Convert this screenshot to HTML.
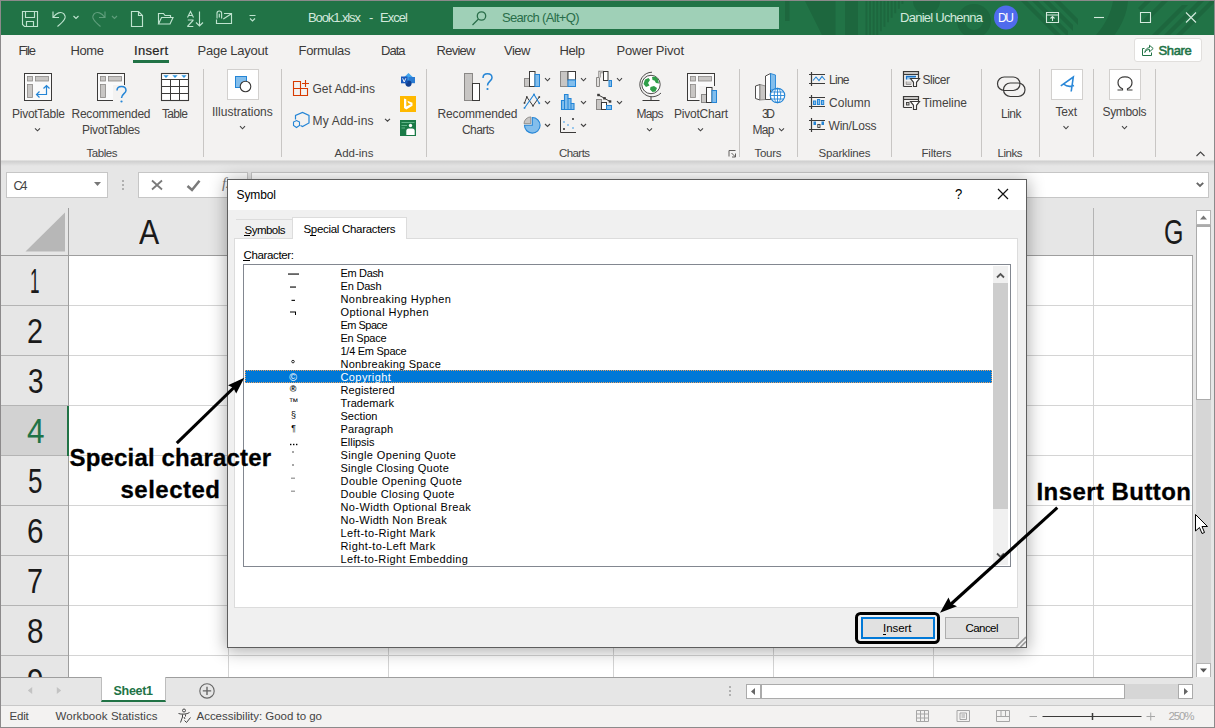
<!DOCTYPE html>
<html><head><meta charset="utf-8">
<style>
*{box-sizing:border-box;margin:0;padding:0}
html,body{width:1215px;height:728px;overflow:hidden;background:#f3f2f1}
body{font-family:"Liberation Sans",sans-serif;position:relative;color:#262626}
.a{position:absolute}
.t{position:absolute;white-space:nowrap;line-height:1}
#win{position:absolute;left:0;top:0;width:1215px;height:728px;overflow:hidden;background:#f3f2f1}
#title{left:1px;top:1px;width:1213px;height:34px;background:#217346;overflow:hidden}
.sep{position:absolute;width:1px;background:#c8c6c4;top:69px;height:88px}
</style></head><body>
<div id="win">
<!-- sec_title -->
<div class="a" id="title">
<svg class="a" style="left:0;top:0" width="1213" height="34" viewBox="1 1 1213 34">
<g fill="#1d673e">
<rect x="785" y="1" width="4.500" height="20"/>
<path d="M805 1H835.500V35H822Z"/>
<rect x="845" y="1" width="13" height="34"/>
<path d="M865.5 1h1.900v34.0h-1.900zM869.1 1h1.900v34.0h-1.900zM872.7 1h1.900v34.0h-1.900zM876.3 1h1.900v34.0h-1.900zM879.9 1h1.900v30.3h-1.900zM883.5 1h1.900v25.8h-1.900zM887.1 1h1.900v21.3h-1.900zM890.7 1h1.900v16.7h-1.900zM894.3 1h1.900v12.2h-1.900zM897.9 1h1.900v7.7h-1.900zM901.5 1h1.900v3.1h-1.900z"/>
<path d="M913 1A13.500 13.500 0 0 0 940 1Z"/>
<path d="M974 4A17 17 0 1 0 974 38A17 17 0 1 0 974 4ZM974 12A9 9 0 1 1 974 30A9 9 0 1 1 974 12Z" fill-rule="evenodd"/>
<path d="M1021 1h6l34 34h-6zM1032 1h6l30 30v4h-2zM1043 1h6l24 24v6zM1054 1h6l18 18v6z"/>
<path d="M1113 1H1128C1127 13 1122 25 1114.500 35H1096C1105 25 1111 13 1113 1Z"/>
<path d="M1138 8l7-7h6l-10 10zM1152 35l30-30h6l-30 30zM1164 35l34-34h6l-34 34zM1176 35l34-34h4v2l-32 32zM1142 21l20-20h6l-23 23z"/>
</g>
<rect x="453" y="7" width="326" height="22" fill="#9fd0b7"/>
<g fill="none" stroke="#2a6e4a" stroke-width="1.3"><circle cx="481.5" cy="16" r="4.2"/><path d="M478.5 19L472.500 25"/></g>
<g fill="none" stroke="#bfe3cf" stroke-width="1.15">
<path d="M22.500 11.500H37.500V26.500H24.500L22.500 24.500ZM25.500 11.500V17.500H34.500V11.500M26.500 26.500V21.500H33.500V26.500"/>
<path d="M53 11.5V17.5H59M53.5 17C56 13 61 11 64 14C67 17.5 64 21 57.5 26.5"/>
<path d="M73.5 16L76 18.5L78.5 16"/>
<path d="M131.500 11.500H138.500L142.500 15.500V26.500H131.500ZM138.500 11.500V15.500H142.500"/>
<path d="M158.5 24V13.5H163.5L165 15.5H170.5V17.5M158.5 24L161.5 17.5H173L170 24Z"/>
<path d="M187.5 17.5L190.5 11.5L193.5 17.5M188.5 15.5H192.5M187.8 20H193V20.5L187.8 26V26.5H193.3M199.500 11.5V26M196 22.5L199.5 26L203 22.5"/>
<path d="M216.500 19.500V23.500H231.500V13.500H224M223.300 19L231 14M217 18.500V13.300a2.300 2.300 0 0 1 4.600 0V18.500M219.300 17.500V13.800"/>
<path d="M249.5 15.5H255.5M250 18.5L252.5 21L255 18.5"/>
</g>
<g fill="none" stroke="#5f9e7c" stroke-width="1.15">
<path d="M105 11.5V17.5H99M104.5 17C102 13 97 11 94 14C91 17.5 94 21 100.5 26.5"/>
<path d="M112 16L114.5 18.5L117 16"/>
</g>
<circle cx="1006" cy="17.5" r="12" fill="#4f6bed"/>
<g fill="none" stroke="#d5eade" stroke-width="1.1">
<path d="M1046.5 12.5H1058.5V22.5H1046.5ZM1046.5 15H1058.5M1052.5 21V17M1050.5 18.5L1052.5 16.5L1054.5 18.5"/>
<path d="M1094 17.5H1104"/>
<path d="M1140.5 12.5H1150.5V22.5H1140.5Z"/>
<path d="M1186 12.500L1196 22.5M1196 12.5L1186 22.5"/>
</g>
</svg>
<div class="t" style="left:307.00px;top:10.00px;font-size:13px;color:#d2e8dc;letter-spacing:-1.096px;">Book1.xlsx</div><div class="t" style="left:368.00px;top:10.00px;font-size:13px;color:#d2e8dc;letter-spacing:0.000px;">-</div><div class="t" style="left:379.00px;top:10.00px;font-size:13px;color:#d2e8dc;letter-spacing:-0.947px;">Excel</div><div class="t" style="left:501.00px;top:10.00px;font-size:13px;color:#2a6e4a;letter-spacing:-0.680px;">Search (Alt+Q)</div><div class="t" style="left:899.00px;top:10.00px;font-size:13px;color:#d2e8dc;letter-spacing:-0.732px;">Daniel Uchenna</div><div class="t" style="left:997.00px;top:11.00px;font-size:12px;color:#ffffff;letter-spacing:-1.330px;">DU</div></div>
<!-- sec_tabs -->
<div class="t" style="left:18.50px;top:44.00px;font-size:13px;color:#3b3a39;letter-spacing:-1.148px;">File</div><div class="t" style="left:70.50px;top:44.00px;font-size:13px;color:#3b3a39;letter-spacing:-0.392px;">Home</div><div class="t" style="left:197.50px;top:44.00px;font-size:13px;color:#3b3a39;letter-spacing:-0.251px;">Page Layout</div><div class="t" style="left:298.50px;top:44.00px;font-size:13px;color:#3b3a39;letter-spacing:-0.311px;">Formulas</div><div class="t" style="left:381.00px;top:44.00px;font-size:13px;color:#3b3a39;letter-spacing:-0.990px;">Data</div><div class="t" style="left:436.50px;top:44.00px;font-size:13px;color:#3b3a39;letter-spacing:-0.732px;">Review</div><div class="t" style="left:504.00px;top:44.00px;font-size:13px;color:#3b3a39;letter-spacing:-0.493px;">View</div><div class="t" style="left:559.50px;top:44.00px;font-size:13px;color:#3b3a39;letter-spacing:-0.411px;">Help</div><div class="t" style="left:616.50px;top:44.00px;font-size:13px;color:#3b3a39;letter-spacing:-0.186px;">Power Pivot</div><div class="t" style="left:134.00px;top:44.00px;font-size:13px;color:#252423;letter-spacing:0.297px;-webkit-text-stroke:0.2px #252423;">Insert</div><div class="a" style="left:133px;top:60px;width:36px;height:3px;background:#217346"></div>
<div class="a" style="left:1134px;top:38px;width:68px;height:24px;background:#fff;border:1px solid #e1dfdd;border-radius:3px"></div>
<svg class="a" style="left:1140px;top:42px" width="16" height="16" viewBox="0 0 16 16"><g fill="none" stroke="#217346" stroke-width="1"><path d="M4.500 6.500H2.500V13.500H11.500V10.500"/><path d="M4.800 10.500C5.300 7.300 7.200 5.700 9.500 5.700V3.300L13.200 6.500L9.500 9.800V7.500C7.500 7.500 6 8.200 4.800 10.500Z"/></g></svg>
<div class="t" style="left:1158.50px;top:44.00px;font-size:13px;color:#217346;letter-spacing:-0.347px;-webkit-text-stroke:0.55px #217346;">Share</div><!-- sec_ribbon -->
<div class="sep" style="left:203px"></div><div class="sep" style="left:281px"></div><div class="sep" style="left:426px"></div><div class="sep" style="left:739px"></div><div class="sep" style="left:797px"></div><div class="sep" style="left:891px"></div><div class="sep" style="left:981px"></div><div class="sep" style="left:1039px"></div><div class="sep" style="left:1093px"></div><div class="sep" style="left:1155px"></div>
<div class="a" style="left:227px;top:69px;width:32px;height:31px;background:#fff;border:1px solid #d2d0ce"></div><div class="a" style="left:1051px;top:69px;width:32px;height:31px;background:#fff;border:1px solid #d2d0ce"></div><div class="a" style="left:1109px;top:69px;width:32px;height:31px;background:#fff;border:1px solid #d2d0ce"></div>
<svg class="a" style="left:0;top:65px" width="1215" height="96" viewBox="0 65 1215 96">
<rect x="24.5" y="73.5" width="27" height="27" fill="#fafafa" stroke="#3b3a39"/><rect x="27.5" y="76.5" width="5" height="4.5" fill="#c8c6c4" stroke="#8a8886" stroke-width=".8"/><rect x="35.5" y="76.5" width="13" height="4.5" fill="#c8c6c4" stroke="#8a8886" stroke-width=".8"/><rect x="27.5" y="84.5" width="5" height="13" fill="#c8c6c4" stroke="#8a8886" stroke-width=".8"/><path d="M36.5 94.5H46.500V85.5M39.5 91.5L36.500 94.5L39.5 97.5M43.5 88.5L46.5 85.500L49.5 88.5" fill="none" stroke="#2485d6" stroke-width="1.2"/><rect x="34" y="83" width="19" height="19" fill="#f3f2f1" opacity="0"/><rect x="97.5" y="73.5" width="27" height="27" fill="#fafafa" stroke="#3b3a39"/><rect x="100.5" y="76.5" width="5" height="4.5" fill="#c8c6c4" stroke="#8a8886" stroke-width=".8"/><rect x="108.5" y="76.5" width="13" height="4.5" fill="#c8c6c4" stroke="#8a8886" stroke-width=".8"/><rect x="100.5" y="84.5" width="5" height="13" fill="#c8c6c4" stroke="#8a8886" stroke-width=".8"/><rect x="113" y="85" width="14" height="18" fill="#f3f2f1"/><path d="M117 90.500C117 87.5 119 86.500 121.5 86.5C124.5 86.500 126 88.5 126 90.5C126 93.5 121.5 94 121.5 98" fill="none" stroke="#2485d6" stroke-width="1.5"/><circle cx="121.5" cy="101.5" r="1.1" fill="#2485d6"/><rect x="161.500" y="73.500" width="27" height="27" fill="#fff" stroke="#3b3a39" stroke-width="1.100"/><path d="M161.500 79.500H188.500M161.500 86.500H188.500M161.500 93.500H188.500M170.500 79.500V100.500M179.500 79.500V100.500" stroke="#3b3a39" fill="none" stroke-width="1"/><path d="M163.300 75.200H168.700L166 78ZM172.300 75.200H177.700L175 78ZM181.300 75.200H186.700L184 78Z" fill="#2b95e0"/><rect x="235.5" y="76.5" width="11" height="11" fill="#83beec" stroke="#2485d6"/><circle cx="245.5" cy="86.5" r="5.3" fill="#fff" stroke="#3b3a39" stroke-width="1.1"/><path d="M240.0 126.2L242.5 128.8L245.0 126.2" fill="none" stroke="#444" stroke-width="1.1"/><path d="M35.0 128.3L37.5 130.8L40.0 128.3" fill="none" stroke="#444" stroke-width="1.1"/><path d="M293.500 81.5H300.500V95.500H293.5ZM293.5 88.5H307.5V95.5H300.5M305.500 80V87M302 83.500H309" fill="none" stroke="#d83b01" stroke-width="1.1"/><path d="M295.5 119.500V115.500L302.5 112.500L309 115.500V123L302.500 126.500L300.500 125.500" fill="none" stroke="#2485d6" stroke-width="1.2"/><path d="M296.500 120.500L299.500 122V125.500L296.500 127.500L293.500 125.500V122Z" fill="#f3f2f1" stroke="#2485d6" stroke-width="1.1"/><path d="M385.0 118.8L387.5 121.2L390.0 118.8" fill="none" stroke="#444" stroke-width="1.1"/><path d="M408.500 73L413.200 77.600L408.500 82.200L403.800 77.600Z" fill="#41a5ee"/><rect x="408.500" y="77" width="6.500" height="6.200" fill="#2b7cd3"/><circle cx="408.500" cy="83.600" r="3.100" fill="#103f91"/><rect x="401" y="76.500" width="6.500" height="6.800" fill="#185abd"/><path d="M402.600 78.300L404.200 82L405.800 78.300" fill="none" stroke="#fff" stroke-width=".9"/><rect x="400" y="96" width="16" height="16" fill="#ffb900"/><path d="M404 98.500L406.300 99.300V106.500L410.800 104.200L408.300 103L407.300 100.800L412.500 102.800V105.800L406.300 109.500L404 108Z" fill="#fff"/><rect x="400" y="120" width="16" height="16" fill="#1a7a47"/><path d="M401.500 122.500H414.500M401.500 125.500H407M401.500 128H405" stroke="#5fb487" stroke-width="1.2"/><circle cx="410.500" cy="125.500" r="1.700" fill="#fff"/><path d="M406.300 135V131Q406.300 128.500 408.800 128.500H412.200Q414.700 128.500 414.700 131V135Z" fill="#fff"/><rect x="464.500" y="73.5" width="8" height="27" fill="#c8c6c4" stroke="#8a8886"/><rect x="472.500" y="83.500" width="7" height="17" fill="#fff" stroke="#3b3a39"/><path d="M483 78C483 75 485 73.800 487.500 73.800C490.500 73.800 492 75.800 492 77.800C492 81 487.500 81.500 487.500 85.500" fill="none" stroke="#2485d6" stroke-width="1.5"/><circle cx="487.500" cy="89" r="1.1" fill="#2485d6"/><rect x="524.5" y="78.5" width="5" height="8" fill="#c8c6c4" stroke="#8a8886"/><rect x="529.5" y="71.5" width="5.500" height="15" fill="#fff" stroke="#3b3a39"/><rect x="535" y="74.5" width="4.500" height="12" fill="#83beec" stroke="#2485d6"/><rect x="560.5" y="71.5" width="7.500" height="15" fill="#c8c6c4" stroke="#8a8886"/><rect x="568" y="71.5" width="7.500" height="8.500" fill="#fff" stroke="#3b3a39"/><rect x="568" y="80" width="7.500" height="6.500" fill="#83beec" stroke="#2485d6"/><path d="M596.500 86.500V77.500H599.500V86.500Z" fill="#e1dfdd" stroke="#8a8886"/><path d="M599.500 77.500V72H603.500" fill="none" stroke="#8a8886" stroke-width="2.4"/><path d="M599.500 77.500V72H603.500" fill="none" stroke="#e1dfdd" stroke-width=".8"/><rect x="603.500" y="71.500" width="4.500" height="9" fill="#fff" stroke="#3b3a39"/><rect x="609" y="80.500" width="2.500" height="6" fill="#83beec" stroke="#2485d6"/><path d="M524.500 103L526.800 97L533 105.800L539.300 97" fill="none" stroke="#3b3a39" stroke-width="1"/><path d="M524.500 108L534 94.500L539.300 103.300" fill="none" stroke="#2485d6" stroke-width="1.1"/><rect x="523.7" y="102.2" width="1.600" height="1.6" fill="#3b3a39"/><rect x="526" y="96.2" width="1.600" height="1.6" fill="#3b3a39"/><rect x="532.2" y="105" width="1.600" height="1.6" fill="#3b3a39"/><rect x="538.5" y="96.2" width="1.600" height="1.6" fill="#3b3a39"/><rect x="523.7" y="107.2" width="1.600" height="1.6" fill="#2485d6"/><rect x="533.2" y="93.7" width="1.600" height="1.6" fill="#2485d6"/><rect x="538.5" y="102.5" width="1.600" height="1.6" fill="#2485d6"/><path d="M561.500 109.500V100.500H564.500V94.500H568V98.500H571V103.500H574V109.500Z" fill="#83beec" stroke="#2485d6" stroke-width="1.1"/><path d="M564.500 100.500V109.500M568 98.500V109.500M571 103.500V109.500" stroke="#2485d6" stroke-width="1"/><rect x="596.500" y="99.500" width="5" height="10" fill="#c8c6c4" stroke="#8a8886"/><rect x="601.500" y="102.500" width="5" height="7" fill="#fff" stroke="#3b3a39"/><rect x="606.500" y="105.500" width="5" height="4" fill="#83beec" stroke="#2485d6"/><path d="M598.500 95L604.500 98.300L610 101.500" stroke="#3b3a39" fill="none" stroke-width="1"/><rect x="597.2" y="93.8" width="2.600" height="2.400" fill="#3b3a39"/><rect x="603.2" y="97.1" width="2.600" height="2.400" fill="#3b3a39"/><rect x="608.7" y="100.3" width="2.600" height="2.400" fill="#3b3a39"/><path d="M532.300 117.500V125.200H524.500A7.800 7.800 0 1 0 532.300 117.500Z" fill="#83beec" stroke="#2485d6" stroke-width="1.1"/><path d="M530.800 123.700H524A6.900 6.900 0 0 1 530.800 116.900Z" fill="#c8c6c4" stroke="#8a8886" stroke-width=".9"/><path d="M560.500 117V132.500H576" fill="none" stroke="#3b3a39" stroke-width="1"/><rect x="563.1" y="121.1" width="1.800" height="1.800" fill="#83beec"/><rect x="567.1" y="124.1" width="1.800" height="1.800" fill="#83beec"/><rect x="572.1" y="127.1" width="1.800" height="1.800" fill="#83beec"/><rect x="572.1" y="118.1" width="1.800" height="1.800" fill="#3b3a39"/><rect x="563.1" y="128.1" width="1.800" height="1.800" fill="#3b3a39"/><path d="M545.0 78.2L547.5 80.8L550.0 78.2" fill="none" stroke="#444" stroke-width="1.1"/><path d="M545.0 101.2L547.5 103.7L550.0 101.2" fill="none" stroke="#444" stroke-width="1.1"/><path d="M581.0 78.2L583.5 80.8L586.0 78.2" fill="none" stroke="#444" stroke-width="1.1"/><path d="M581.0 101.2L583.5 103.7L586.0 101.2" fill="none" stroke="#444" stroke-width="1.1"/><path d="M617.0 78.2L619.5 80.8L622.0 78.2" fill="none" stroke="#444" stroke-width="1.1"/><path d="M617.0 101.2L619.5 103.7L622.0 101.2" fill="none" stroke="#444" stroke-width="1.1"/><path d="M545.0 124.0L547.5 126.5L550.0 124.0" fill="none" stroke="#444" stroke-width="1.1"/><path d="M581.0 124.0L583.5 126.5L586.0 124.0" fill="none" stroke="#444" stroke-width="1.1"/><circle cx="651" cy="84.5" r="9.200" fill="#fff" stroke="#3b3a39" stroke-width=".9"/><path d="M645 79.500L648.500 78L650 80L648 83L649.500 85.500L646 87L643.500 84Z M652 77L655.500 76.500L658 79L659 83.500L656 83L654.500 80.500L652.500 80Z M650.500 87L654 86L657 88L655.500 91.500L652.500 92L650 89.500Z" fill="#2f9e49"/><path d="M652 72.200A12.300 12.300 0 1 0 661 93" fill="none" stroke="#3b3a39" stroke-width=".9"/><path d="M651 96.800V100M642.500 100.500H659.500" fill="none" stroke="#3b3a39" stroke-width="1"/><path d="M647.0 128.3L649.5 130.8L652.0 128.3" fill="none" stroke="#444" stroke-width="1.1"/><rect x="687.500" y="73.500" width="27" height="27" fill="#fafafa" stroke="#3b3a39"/><rect x="690.500" y="76.500" width="5" height="4.500" fill="#c8c6c4" stroke="#8a8886" stroke-width=".8"/><rect x="698.500" y="76.500" width="13" height="4.500" fill="#c8c6c4" stroke="#8a8886" stroke-width=".8"/><rect x="690.500" y="84.500" width="5" height="13" fill="#c8c6c4" stroke="#8a8886" stroke-width=".8"/><rect x="699.500" y="86" width="18.500" height="17.500" fill="#f3f2f1"/><rect x="701.500" y="94.500" width="5" height="8" fill="#c8c6c4" stroke="#8a8886"/><rect x="706.500" y="87.500" width="5.500" height="15" fill="#fff" stroke="#3b3a39"/><rect x="712" y="90.500" width="4.500" height="12" fill="#83beec" stroke="#2485d6"/><path d="M698.0 128.3L700.5 130.8L703.0 128.3" fill="none" stroke="#444" stroke-width="1.1"/><path d="M729 150.500H735.500M729 150.500V156.500M731.500 153L735.500 157M735.500 153.500V157H732" fill="none" stroke="#605e5c" stroke-width="1"/><path d="M755.500 86L760 84.500V100L755.500 98.500Z" fill="#fff" stroke="#3b3a39" stroke-width=".9"/><path d="M760 84.500L765.500 86V99.500L760 100Z" fill="#c8c6c4" stroke="#8a8886" stroke-width=".9"/><path d="M765.500 76L770.500 73.500V99.500L765.500 99.500Z" fill="#fff" stroke="#3b3a39" stroke-width=".9"/><path d="M770.500 73.500L775.500 75V90H770.500Z" fill="#83beec" stroke="#2485d6" stroke-width=".9"/><circle cx="777.500" cy="95.500" r="7.200" fill="#fff" stroke="#2485d6" stroke-width="1.200"/><path d="M770.500 95.500H784.500M777.500 88.500V102.500M771.500 92H783.500M771.500 99H783.500" stroke="#2485d6" stroke-width=".9" fill="none"/><ellipse cx="777.500" cy="95.500" rx="3.300" ry="7.200" fill="none" stroke="#2485d6" stroke-width=".9"/><path d="M779.0 128.3L781.5 130.8L784.0 128.3" fill="none" stroke="#444" stroke-width="1.1"/><path d="M811.500 72V86M809 74.5H825M809 83.5H825" fill="none" stroke="#3b3a39" stroke-width="1.2"/><path d="M811.500 95V109M809 97.5H825M809 106.5H825" fill="none" stroke="#3b3a39" stroke-width="1.2"/><path d="M811.500 118V132M809 120.5H825M809 129.5H825" fill="none" stroke="#3b3a39" stroke-width="1.2"/><path d="M813 80.500L816 77L819 80.500L822 76.500L825 80" fill="none" stroke="#2485d6" stroke-width="1.1"/><rect x="813.5" y="101" width="2.200" height="3.5" fill="#83beec" stroke="#2485d6" stroke-width="1"/><rect x="817.5" y="99.5" width="2.200" height="5" fill="#83beec" stroke="#2485d6" stroke-width="1"/><rect x="821.5" y="100.5" width="2.200" height="4" fill="#83beec" stroke="#2485d6" stroke-width="1"/><rect x="813.500" y="121.500" width="2.500" height="3.500" fill="#2485d6"/><rect x="817.800" y="124.500" width="2.200" height="3" fill="none" stroke="#3b3a39" stroke-width=".9"/><rect x="821.500" y="121.500" width="2.500" height="3.500" fill="#2485d6"/><rect x="903.500" y="71.500" width="15" height="3" fill="#c8c6c4"/><path d="M903.500 86.500V71.500H918.500V78M903.500 74.500H918.500M903.500 86.500H912" fill="none" stroke="#3b3a39" stroke-width="1.200"/><rect x="906.500" y="76.500" width="9" height="3" fill="#9ccbf0"/><path d="M906.500 79.500V76.500H916" fill="none" stroke="#1a73c8" stroke-width="1.300"/><rect x="906.200" y="81.500" width="5.500" height="3" fill="#c8c6c4"/><path d="M906.200 81.500V84.500H911" fill="none" stroke="#8a8886" stroke-width=".8"/><path d="M910.500 78.500H919.500L916.500 82.300V86.500H913.500V82.300Z" fill="#fff" stroke="#3b3a39" stroke-width="1.150"/><rect x="903.500" y="96.500" width="15" height="3" fill="#c8c6c4"/><path d="M903.500 107.500V96.500H918.500V101.500M903.500 99.500H918.500M903.500 107.500H912" fill="none" stroke="#3b3a39" stroke-width="1.200"/><rect x="906.500" y="102.500" width="2.500" height="2.500" fill="#c8c6c4" stroke="#3b3a39" stroke-width=".9"/><path d="M910.500 101.500H919.500L916.500 105.300V109.500H913.500V105.300Z" fill="#fff" stroke="#3b3a39" stroke-width="1.150"/><rect x="997.500" y="77" width="22.500" height="13.500" rx="6.750" fill="none" stroke="#3b3a39" stroke-width="1.200"/><rect x="1003.500" y="83" width="21.500" height="13.500" rx="6.750" fill="none" stroke="#3b3a39" stroke-width="1.200"/><path d="M1060.800 85.800L1073.300 77L1071.200 91.500M1063.500 84C1066.500 86.500 1070 87 1074 85.500" fill="none" stroke="#2b88d8" stroke-width="1.600"/><path d="M1063.5 126.2L1066.0 128.8L1068.5 126.2" fill="none" stroke="#444" stroke-width="1.1"/><path d="M1117.500 90H1122.500V88.800C1119.500 87.500 1118 85 1118 82.500C1118 78.500 1121.500 76.800 1125 76.800C1128.500 76.800 1132 78.500 1132 82.500C1132 85 1130.500 87.500 1127.500 88.800V90H1132.500" fill="none" stroke="#3b3a39" stroke-width="1.200"/><path d="M1122.0 126.2L1124.5 128.8L1127.0 126.2" fill="none" stroke="#444" stroke-width="1.1"/><path d="M1196.500 156L1200.500 152L1204.500 156" fill="none" stroke="#444" stroke-width="1.1"/></svg>
<div class="t" style="left:12.00px;top:108.00px;font-size:12px;color:#454341;letter-spacing:-0.263px;">PivotTable</div><div class="t" style="left:71.50px;top:108.00px;font-size:12px;color:#454341;letter-spacing:-0.237px;">Recommended</div><div class="t" style="left:82.00px;top:124.00px;font-size:12px;color:#454341;letter-spacing:-0.337px;">PivotTables</div><div class="t" style="left:162.00px;top:108.00px;font-size:12px;color:#454341;letter-spacing:-0.671px;">Table</div><div class="t" style="left:212.00px;top:106.00px;font-size:12px;color:#454341;letter-spacing:0.009px;">Illustrations</div><div class="t" style="left:312.50px;top:83.00px;font-size:12px;color:#454341;letter-spacing:-0.020px;">Get Add-ins</div><div class="t" style="left:312.50px;top:115.00px;font-size:12px;color:#454341;letter-spacing:0.183px;">My Add-ins</div><div class="t" style="left:437.50px;top:108.00px;font-size:12px;color:#454341;letter-spacing:-0.137px;">Recommended</div><div class="t" style="left:462.00px;top:124.00px;font-size:12px;color:#454341;letter-spacing:-0.569px;">Charts</div><div class="t" style="left:636.50px;top:108.00px;font-size:12px;color:#454341;letter-spacing:-0.781px;">Maps</div><div class="t" style="left:674.00px;top:108.00px;font-size:12px;color:#454341;letter-spacing:-0.225px;">PivotChart</div><div class="t" style="left:762.00px;top:108.00px;font-size:12px;color:#454341;letter-spacing:-2.338px;">3D</div><div class="t" style="left:752.50px;top:124.00px;font-size:12px;color:#454341;letter-spacing:-0.671px;">Map</div><div class="t" style="left:829.00px;top:74.00px;font-size:12px;color:#454341;letter-spacing:-0.729px;">Line</div><div class="t" style="left:829.00px;top:97.00px;font-size:12px;color:#454341;letter-spacing:0.030px;">Column</div><div class="t" style="left:828.50px;top:120.00px;font-size:12px;color:#454341;letter-spacing:-0.193px;">Win/Loss</div><div class="t" style="left:922.50px;top:74.00px;font-size:12px;color:#454341;letter-spacing:-0.501px;">Slicer</div><div class="t" style="left:922.50px;top:97.00px;font-size:12px;color:#454341;letter-spacing:-0.057px;">Timeline</div><div class="t" style="left:1001.00px;top:108.00px;font-size:12px;color:#454341;letter-spacing:-0.513px;">Link</div><div class="t" style="left:1055.50px;top:106.00px;font-size:12px;color:#454341;letter-spacing:-0.170px;">Text</div><div class="t" style="left:1102.50px;top:106.00px;font-size:12px;color:#454341;letter-spacing:-0.336px;">Symbols</div><div class="t" style="left:86.50px;top:148.00px;font-size:11.5px;color:#444444;letter-spacing:-0.448px;">Tables</div><div class="t" style="left:334.50px;top:148.00px;font-size:11.5px;color:#444444;letter-spacing:0.001px;">Add-ins</div><div class="t" style="left:559.00px;top:148.00px;font-size:11.5px;color:#444444;letter-spacing:-0.574px;">Charts</div><div class="t" style="left:754.50px;top:148.00px;font-size:11.5px;color:#444444;letter-spacing:-0.280px;">Tours</div><div class="t" style="left:818.50px;top:148.00px;font-size:11.5px;color:#444444;letter-spacing:-0.188px;">Sparklines</div><div class="t" style="left:921.50px;top:148.00px;font-size:11.5px;color:#444444;letter-spacing:-0.218px;">Filters</div><div class="t" style="left:997.50px;top:148.00px;font-size:11.5px;color:#444444;letter-spacing:-0.462px;">Links</div><!-- sec_fbar -->
<div class="a" style="left:1px;top:161px;width:1213px;height:567px;background:#e6e6e6"></div>
<div class="a" style="left:1px;top:160px;width:1213px;height:6px;background:linear-gradient(#eeedec 0%,#cfcfcf 18%,#e6e6e6 100%)"></div>
<div class="a" style="left:6px;top:172px;width:102px;height:26px;background:#fff;border:1px solid #c6c6c6"></div>
<div class="t" style="left:13.50px;top:180.00px;font-size:12.5px;color:#444;letter-spacing:-1.977px;">C4</div><svg class="a" style="left:90px;top:178px" width="16" height="12"><path d="M4 4H11L7.500 8Z" fill="#777"/></svg>
<div class="a" style="left:122px;top:180px;width:2px;height:2px;background:#b0b0b0"></div><div class="a" style="left:122px;top:184px;width:2px;height:2px;background:#b0b0b0"></div><div class="a" style="left:122px;top:188px;width:2px;height:2px;background:#b0b0b0"></div><div class="a" style="left:138px;top:172px;width:110px;height:26px;background:#fff;border:1px solid #c6c6c6"></div>
<svg class="a" style="left:138px;top:172px" width="110" height="26"><path d="M14 8.500L24 17.500M24 8.500L14 17.500" stroke="#7a7a7a" stroke-width="1.800" fill="none"/><path d="M49.500 14L54 18L61.500 8.800" stroke="#7a7a7a" stroke-width="2.500" fill="none"/></svg>
<div class="t" style="left:222px;top:176px;font-size:15px;font-style:italic;font-family:'Liberation Serif',serif;color:#777">fx</div>
<div class="a" style="left:251px;top:172px;width:958px;height:26px;background:#fff;border:1px solid #c6c6c6"></div>
<svg class="a" style="left:1194px;top:180px" width="12" height="10"><path d="M2.800 2.800L6 6L9.200 2.800" fill="none" stroke="#666" stroke-width="1.900"/></svg>
<!-- sec_sheet -->
<div class="a" style="left:69px;top:256px;width:1124px;height:421px;background:#fff"></div>
<div class="a" style="left:69px;top:305px;width:1124px;height:1px;background:#d4d4d4"></div><div class="a" style="left:69px;top:355px;width:1124px;height:1px;background:#d4d4d4"></div><div class="a" style="left:69px;top:405px;width:1124px;height:1px;background:#d4d4d4"></div><div class="a" style="left:69px;top:455px;width:1124px;height:1px;background:#d4d4d4"></div><div class="a" style="left:69px;top:505px;width:1124px;height:1px;background:#d4d4d4"></div><div class="a" style="left:69px;top:555px;width:1124px;height:1px;background:#d4d4d4"></div><div class="a" style="left:69px;top:605px;width:1124px;height:1px;background:#d4d4d4"></div><div class="a" style="left:69px;top:655px;width:1124px;height:1px;background:#d4d4d4"></div><div class="a" style="left:228px;top:256px;width:1px;height:421px;background:#d4d4d4"></div><div class="a" style="left:388px;top:256px;width:1px;height:421px;background:#d4d4d4"></div><div class="a" style="left:613px;top:256px;width:1px;height:421px;background:#d4d4d4"></div><div class="a" style="left:773px;top:256px;width:1px;height:421px;background:#d4d4d4"></div><div class="a" style="left:933px;top:256px;width:1px;height:421px;background:#d4d4d4"></div><div class="a" style="left:1093px;top:256px;width:1px;height:421px;background:#d4d4d4"></div>
<div class="a" style="left:1px;top:255px;width:1192px;height:1px;background:#9e9e9e"></div><div class="a" style="left:68px;top:208px;width:1px;height:469px;background:#9e9e9e"></div><div class="a" style="left:1192px;top:256px;width:1px;height:421px;background:#a6a6a6"></div><div class="a" style="left:228px;top:208px;width:1px;height:47px;background:#b4b4b4"></div><div class="a" style="left:388px;top:208px;width:1px;height:47px;background:#b4b4b4"></div><div class="a" style="left:613px;top:208px;width:1px;height:47px;background:#b4b4b4"></div><div class="a" style="left:773px;top:208px;width:1px;height:47px;background:#b4b4b4"></div><div class="a" style="left:933px;top:208px;width:1px;height:47px;background:#b4b4b4"></div><div class="a" style="left:1093px;top:208px;width:1px;height:47px;background:#b4b4b4"></div><div class="a" style="left:1px;top:305px;width:67px;height:1px;background:#b4b4b4"></div><div class="a" style="left:1px;top:355px;width:67px;height:1px;background:#b4b4b4"></div><div class="a" style="left:1px;top:405px;width:67px;height:1px;background:#b4b4b4"></div><div class="a" style="left:1px;top:455px;width:67px;height:1px;background:#b4b4b4"></div><div class="a" style="left:1px;top:505px;width:67px;height:1px;background:#b4b4b4"></div><div class="a" style="left:1px;top:555px;width:67px;height:1px;background:#b4b4b4"></div><div class="a" style="left:1px;top:605px;width:67px;height:1px;background:#b4b4b4"></div><div class="a" style="left:1px;top:655px;width:67px;height:1px;background:#b4b4b4"></div>
<div class="a" style="left:1px;top:406px;width:67px;height:49px;background:#d2d2d2"></div><div class="a" style="left:67px;top:406px;width:2px;height:50px;background:#217346"></div>
<svg class="a" style="left:20px;top:208px" width="48" height="47"><path d="M5.500 43.500H45V4.500Z" fill="#b7b7b7"/></svg>
<div class="t" style="left:138.50px;top:214.00px;font-size:35px;color:#1a1a1a;transform-origin:0 0;transform:scaleX(0.865);">A</div><div class="t" style="left:1163.50px;top:214.00px;font-size:35px;color:#1a1a1a;transform-origin:0 0;transform:scaleX(0.716);">G</div><div class="t" style="left:29.50px;top:263.00px;font-size:35px;color:#1a1a1a;transform-origin:0 0;transform:scaleX(0.488);">1</div><div class="t" style="left:27.00px;top:313.00px;font-size:35px;color:#1a1a1a;transform-origin:0 0;transform:scaleX(0.822);">2</div><div class="t" style="left:27.50px;top:363.00px;font-size:35px;color:#1a1a1a;transform-origin:0 0;transform:scaleX(0.797);">3</div><div class="t" style="left:26.50px;top:413.00px;font-size:35px;color:#217346;transform-origin:0 0;transform:scaleX(0.899);">4</div><div class="t" style="left:28.00px;top:463.00px;font-size:35px;color:#1a1a1a;transform-origin:0 0;transform:scaleX(0.745);">5</div><div class="t" style="left:27.00px;top:513.00px;font-size:35px;color:#1a1a1a;transform-origin:0 0;transform:scaleX(0.848);">6</div><div class="t" style="left:27.00px;top:563.00px;font-size:35px;color:#1a1a1a;transform-origin:0 0;transform:scaleX(0.822);">7</div><div class="t" style="left:27.00px;top:613.00px;font-size:35px;color:#1a1a1a;transform-origin:0 0;transform:scaleX(0.848);">8</div><div class="t" style="left:27.00px;top:663.00px;font-size:35px;color:#1a1a1a;transform-origin:0 0;transform:scaleX(0.848);">9</div>
<div class="a" style="left:1196px;top:210px;width:15px;height:468px;background:#d6d6d6"></div><div class="a" style="left:1196px;top:210px;width:15px;height:15px;background:#fff;border:1px solid #b4b4b4"></div><div class="a" style="left:1196px;top:225px;width:15px;height:175px;background:#fff;border:1px solid #ababab;border-top:2px solid #ababab"></div><div class="a" style="left:1196px;top:663px;width:15px;height:15px;background:#fff;border:1px solid #b4b4b4"></div><svg class="a" style="left:1196px;top:210px" width="15" height="468"><path d="M4 9.500L7.500 5.500L11 9.500Z" fill="#777"/><path d="M4 458.500L7.500 462.500L11 458.500Z" fill="#555"/></svg>
<!-- sec_bottom -->
<div class="a" style="left:1px;top:677px;width:1213px;height:29px;background:#e6e6e6"></div><div class="a" style="left:1px;top:677px;width:1192px;height:1px;background:#9e9e9e"></div>
<div class="a" style="left:101px;top:677px;width:65px;height:25px;background:#fff;border-left:1px solid #bdbdbd;border-right:1px solid #bdbdbd;border-bottom:2px solid #217346"></div><div class="t" style="left:113.50px;top:685.00px;font-size:12.5px;color:#217346;letter-spacing:-0.298px;font-weight:bold;">Sheet1</div><svg class="a" style="left:20px;top:680px" width="200" height="22"><path d="M7.800 10.600L12.200 7.100V14.100Z M41.200 10.600L36.800 7.100V14.100Z" fill="#c3c3c3"/><circle cx="187" cy="10.900" r="7.200" fill="none" stroke="#666" stroke-width="1.1"/><path d="M182.800 10.900H191.200M187 6.700V15.100" stroke="#666" stroke-width="1.400"/></svg>
<div class="a" style="left:729px;top:686px;width:2px;height:2px;background:#b0b0b0"></div><div class="a" style="left:729px;top:690px;width:2px;height:2px;background:#b0b0b0"></div><div class="a" style="left:729px;top:694px;width:2px;height:2px;background:#b0b0b0"></div><div class="a" style="left:746px;top:684px;width:447px;height:15px;background:#d6d6d6"></div><div class="a" style="left:746px;top:684px;width:15px;height:15px;background:#fff;border:1px solid #ababab"></div><div class="a" style="left:760px;top:684px;width:365px;height:15px;background:#fff;border:1px solid #ababab;border-left-width:2px"></div><div class="a" style="left:1178px;top:684px;width:15px;height:15px;background:#fff;border:1px solid #ababab"></div><svg class="a" style="left:746px;top:684px" width="447" height="15"><path d="M9 4L5 7.500L9 11Z M438 4L442 7.500L438 11Z" fill="#666"/></svg>
<div class="a" style="left:1px;top:705px;width:1213px;height:22px;background:#f3f2f1;border-top:1px solid #c8c8c8"></div>
<div class="t" style="left:9.50px;top:711.00px;font-size:11.5px;color:#444;letter-spacing:-0.173px;">Edit</div><div class="t" style="left:55.50px;top:711.00px;font-size:11.5px;color:#444;letter-spacing:0.069px;">Workbook Statistics</div><div class="t" style="left:196.50px;top:711.00px;font-size:11.5px;color:#444;letter-spacing:-0.018px;">Accessibility: Good to go</div><svg class="a" style="left:176px;top:707px" width="18" height="18"><g fill="none" stroke="#444" stroke-width="1"><circle cx="8" cy="3.500" r="1.500"/><path d="M2.500 6.500C5 7.500 11 7.500 13.500 5.500M6.500 7.500V10L4.500 15.500M9.500 7.500V9.500M8 10L9 12"/><path d="M8.500 13.500L10.500 15.500L14.500 10.500"/></g></svg>
<svg class="a" style="left:910px;top:706px" width="300" height="20"><g fill="none" stroke="#a6a6a6" stroke-width="1"><path d="M6.500 4.500H18.500V15.500H6.500ZM6.500 8H18.500M6.500 12H18.500M10.500 4.500V15.500M14.500 4.500V15.500"/><path d="M47 4.500H59.500V15.500H47ZM50 7H56.500V13.500H50ZM51.500 9H55M51.500 11H55"/><path d="M86.500 4.500H99.500V15.500H86.500ZM91 4.500V10.500M95.500 4.500V10.500M86.500 10.500H99.500"/><path d="M119.500 10.500H127"/><path d="M236.500 10.500H245M240.750 6.500V14.500"/></g><path d="M132.500 10.500H231.500" stroke="#3b3a39" stroke-width="1"/><path d="M182.500 7V14" stroke="#3b3a39" stroke-width="1.500"/></svg>
<div class="t" style="left:1168.50px;top:711.00px;font-size:11.5px;color:#a6a6a6;letter-spacing:-1.137px;">250%</div><!-- sec_dlg -->
<div class="a" style="left:227px;top:179px;width:800px;height:469px;background:#f0f0f0;border:1px solid #5e5e5e;box-shadow:0 2px 16px 1px rgba(0,0,0,.33)"></div>
<div class="a" style="left:228px;top:180px;width:798px;height:30px;background:#fff"></div>
<div class="t" style="left:236.50px;top:189.00px;font-size:12px;color:#000;letter-spacing:-0.102px;">Symbol</div><div class="t" style="left:954.600px;top:187px;font-size:14.500px;color:#000;transform-origin:0 0;transform:scaleX(.9)">?</div><svg class="a" style="left:990px;top:183px" width="24" height="24"><path d="M8 6L18 16M18 6L8 16" stroke="#111" stroke-width="1.200"/></svg>
<div class="a" style="left:234px;top:238px;width:784px;height:370px;background:#fff;border:1px solid #dcdcdc"></div>
<div class="a" style="left:236px;top:219px;width:57px;height:19px;background:#f0f0f0;border-top:1px solid #dcdcdc"></div><div class="a" style="left:292px;top:217px;width:115px;height:22px;background:#fff;border:1px solid #dcdcdc;border-bottom:none"></div>
<div class="t" style="left:244.50px;top:225.00px;font-size:11.5px;color:#000;letter-spacing:-0.516px;">Symbols</div><div class="a" style="left:244px;top:235px;width:6px;height:1px;background:#000"></div><div class="t" style="left:303.50px;top:224.00px;font-size:11.5px;color:#000;letter-spacing:-0.303px;">Special Characters</div><div class="a" style="left:309.500px;top:235px;width:6px;height:1px;background:#000"></div>
<div class="t" style="left:243.50px;top:250.00px;font-size:11.5px;color:#000;letter-spacing:-0.354px;">Character:</div><div class="a" style="left:243px;top:260px;width:7px;height:1px;background:#000"></div>
<div class="a" style="left:243px;top:264px;width:768px;height:303px;background:#fff;border:1px solid #828790"></div>
<div class="a" style="left:993px;top:266px;width:15px;height:299px;background:#f0f0f0"></div><div class="a" style="left:993px;top:283px;width:15px;height:226px;background:#cdcdcd"></div><svg class="a" style="left:993px;top:266px" width="15" height="299"><path d="M4 11.500L7.500 8L11 11.500" fill="none" stroke="#555" stroke-width="1.800"/><path d="M4 287.500L7.500 291L11 287.500" fill="none" stroke="#555" stroke-width="1.800"/></svg>
<div class="a" style="left:245px;top:370px;width:747px;height:13px;background:#0078d7;outline:1px dotted #e8a060;outline-offset:-1px"></div>
<div class="t" style="left:340.50px;top:268.00px;font-size:11px;color:#000;letter-spacing:-0.339px;">Em Dash</div><div class="t" style="left:340.50px;top:281.00px;font-size:11px;color:#000;letter-spacing:-0.198px;">En Dash</div><div class="t" style="left:340.50px;top:294.00px;font-size:11px;color:#000;letter-spacing:0.409px;">Nonbreaking Hyphen</div><div class="t" style="left:340.50px;top:307.00px;font-size:11px;color:#000;letter-spacing:0.447px;">Optional Hyphen</div><div class="t" style="left:340.50px;top:320.00px;font-size:11px;color:#000;letter-spacing:-0.521px;">Em Space</div><div class="t" style="left:340.50px;top:333.00px;font-size:11px;color:#000;letter-spacing:-0.243px;">En Space</div><div class="t" style="left:340.50px;top:346.00px;font-size:11px;color:#000;letter-spacing:-0.272px;">1/4 Em Space</div><div class="t" style="left:340.50px;top:359.00px;font-size:11px;color:#000;letter-spacing:0.230px;">Nonbreaking Space</div><div class="t" style="left:340.50px;top:372.00px;font-size:11px;color:#fff;letter-spacing:0.403px;">Copyright</div><div class="t" style="left:340.50px;top:385.00px;font-size:11px;color:#000;letter-spacing:0.101px;">Registered</div><div class="t" style="left:340.50px;top:398.00px;font-size:11px;color:#000;letter-spacing:0.088px;">Trademark</div><div class="t" style="left:340.50px;top:411.00px;font-size:11px;color:#000;letter-spacing:0.035px;">Section</div><div class="t" style="left:340.50px;top:424.00px;font-size:11px;color:#000;letter-spacing:0.142px;">Paragraph</div><div class="t" style="left:340.50px;top:437.00px;font-size:11px;color:#000;letter-spacing:-0.033px;">Ellipsis</div><div class="t" style="left:340.50px;top:450.00px;font-size:11px;color:#000;letter-spacing:0.371px;">Single Opening Quote</div><div class="t" style="left:340.50px;top:463.00px;font-size:11px;color:#000;letter-spacing:0.261px;">Single Closing Quote</div><div class="t" style="left:340.50px;top:476.00px;font-size:11px;color:#000;letter-spacing:0.462px;">Double Opening Quote</div><div class="t" style="left:340.50px;top:489.00px;font-size:11px;color:#000;letter-spacing:0.325px;">Double Closing Quote</div><div class="t" style="left:340.50px;top:502.00px;font-size:11px;color:#000;letter-spacing:0.396px;">No-Width Optional Break</div><div class="t" style="left:340.50px;top:515.00px;font-size:11px;color:#000;letter-spacing:0.318px;">No-Width Non Break</div><div class="t" style="left:340.50px;top:528.00px;font-size:11px;color:#000;letter-spacing:0.391px;">Left-to-Right Mark</div><div class="t" style="left:340.50px;top:541.00px;font-size:11px;color:#000;letter-spacing:0.391px;">Right-to-Left Mark</div><div class="t" style="left:340.50px;top:554.00px;font-size:11px;color:#000;letter-spacing:0.371px;">Left-to-Right Embedding</div>
<svg class="a" style="left:280px;top:264px" width="30" height="303" viewBox="280 264 30 303"><g fill="#000"><rect x="288" y="273.500" width="11" height="1.100"/><rect x="290" y="286.500" width="6" height="1.100"/><rect x="291.500" y="299.800" width="3.500" height="1.100"/><path d="M290 311.500H296V315H295V312.600H290Z"/><circle cx="293" cy="361.600" r="1.300" fill="none" stroke="#000" stroke-width=".8"/><rect x="290" y="443.800" width="1.400" height="1.400"/><rect x="293" y="443.800" width="1.400" height="1.400"/><rect x="296" y="443.800" width="1.400" height="1.400"/><rect x="292.500" y="451" width="1" height="2" opacity=".7"/><rect x="292.500" y="464" width="1" height="2" opacity=".7"/><rect x="291.500" y="477.500" width="1" height="1.500" opacity=".7"/><rect x="293.500" y="477.500" width="1" height="1.500" opacity=".7"/><rect x="291.500" y="490.500" width="1" height="1.500" opacity=".7"/><rect x="293.500" y="490.500" width="1" height="1.500" opacity=".7"/></g></svg>
<div class="t" style="left:283.2px;width:20px;text-align:center;top:372.11px;font-size:10.5px;color:#fff;">&copy;</div><div class="t" style="left:283.2px;width:20px;text-align:center;top:385.38px;font-size:9px;color:#000;font-weight:bold;">&reg;</div><div class="t" style="left:283.5px;width:20px;text-align:center;top:396.96px;font-size:9.5px;color:#000;">&trade;</div><div class="t" style="left:283.5px;width:20px;text-align:center;top:411.18px;font-size:9px;color:#000;">&sect;</div><div class="t" style="left:283.5px;width:20px;text-align:center;top:424.30px;font-size:8.5px;color:#000;">&para;</div>
<div class="a" style="left:861px;top:617px;width:74px;height:22px;background:#e1e1e1;border:2px solid #0078d7"></div><div class="a" style="left:945px;top:617px;width:74px;height:22px;background:#e1e1e1;border:1px solid #adadad"></div>
<div class="t" style="left:883.00px;top:623.00px;font-size:11.5px;color:#000;letter-spacing:-0.053px;">Insert</div><div class="a" style="left:883px;top:634px;width:3px;height:1px;background:#000"></div><div class="t" style="left:965.50px;top:623.00px;font-size:11.5px;color:#000;letter-spacing:-0.559px;">Cancel</div><svg class="a" style="left:1012px;top:633px" width="14" height="14"><path d="M4 14L14 4M8.500 14L14 8.500" stroke="#9a9a9a" stroke-width="1.700"/></svg>
<!-- sec_annot -->
<svg class="a" style="left:0;top:0" width="1215" height="728" viewBox="0 0 1215 728"><rect x="856.500" y="613.500" width="82" height="29" rx="4" fill="none" stroke="#000" stroke-width="3"/><path d="M1057.300 507.700L950 605" stroke="#000" stroke-width="3.100" fill="none"/><path d="M940 612.700L948.500 597.500L951.200 603.800L957 606.200Z" fill="#000"/><path d="M176.800 443.200L234 387.500" stroke="#000" stroke-width="3.100" fill="none"/><path d="M244.300 377.700L236.200 393.600L233.300 387.700L228 385.200Z" fill="#000"/><path d="M1195.500 514.500V531L1199.500 527.500L1202 533.500L1204.500 532.500L1202 526.500H1207.500Z" fill="#fff" stroke="#000" stroke-width="1"/></svg>
<div class="t" style="left:69.50px;top:446.00px;font-size:24px;color:#000;letter-spacing:0.170px;font-weight:bold;-webkit-text-stroke:0.3px #000;">Special character</div><div class="t" style="left:120.50px;top:478.00px;font-size:24px;color:#000;letter-spacing:0.491px;font-weight:bold;-webkit-text-stroke:0.3px #000;">selected</div><div class="t" style="left:1036.50px;top:480.00px;font-size:24px;color:#000;letter-spacing:0.431px;font-weight:bold;-webkit-text-stroke:0.3px #000;">Insert Button</div><div class="a" style="left:0;top:0;width:1215px;height:1px;background:#8c8a8b"></div>
<div class="a" style="left:0;top:0;width:1px;height:728px;background:#8c8a8b"></div>
<div class="a" style="left:1214px;top:0;width:1px;height:728px;background:#8c8a8b"></div>
<div class="a" style="left:0;top:727px;width:1215px;height:1px;background:#8c8a8b"></div>
</div>
</body></html>
